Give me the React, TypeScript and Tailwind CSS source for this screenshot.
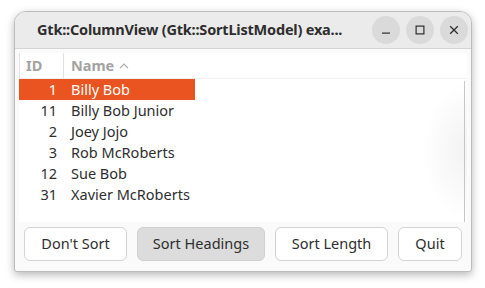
import React, { useState } from "react";

const people = [
  { id: 1, name: "Billy Bob" },
  { id: 11, name: "Billy Bob Junior" },
  { id: 2, name: "Joey Jojo" },
  { id: 3, name: "Rob McRoberts" },
  { id: 12, name: "Sue Bob" },
  { id: 31, name: "Xavier McRoberts" },
];

const font = { fontFamily: '"Noto Sans", "Open Sans", sans-serif' };

function CircleButton({ children }: { children: React.ReactNode }) {
  return (
    <div className="w-[28px] h-[28px] rounded-full bg-[#dadada] flex items-center justify-center text-[#2e2e2e]">
      {children}
    </div>
  );
}

export default function App() {
  const [selected, setSelected] = useState(1);

  return (
    <div
      className="w-[485px] h-[288px] bg-white pt-[11px] pl-[14px]"
      style={font}
    >
      <div className="w-[458px] h-[261px] rounded-t-[12px] rounded-b-[3px] border border-[#bcbcbc] bg-[#fafafa] shadow-[0_3px_8px_rgba(0,0,0,0.28)] flex flex-col overflow-hidden">
        {/* titlebar */}
        <div className="h-[37px] shrink-0 bg-[#ebebeb] border-b border-[#d4d4d4] flex items-center pl-[22px] pr-[3px]">
          <span className="text-[14.5px] font-bold text-[#2e2e2e] tracking-[-0.2px] grow truncate">
            Gtk::ColumnView (Gtk::SortListModel) exa...
          </span>
          <div className="flex gap-[6px] ml-[20px]">
            <CircleButton>
              <svg width="10" height="10" viewBox="0 0 10 10">
                <rect x="1" y="7.5" width="8" height="1.2" fill="currentColor" />
              </svg>
            </CircleButton>
            <CircleButton>
              <svg width="10" height="10" viewBox="0 0 10 10">
                <rect
                  x="1.1"
                  y="1.1"
                  width="7.8"
                  height="7.8"
                  fill="none"
                  stroke="currentColor"
                  strokeWidth="1.2"
                />
              </svg>
            </CircleButton>
            <CircleButton>
              <svg width="10" height="10" viewBox="0 0 10 10">
                <path
                  d="M1.2 1.2 L8.8 8.8 M8.8 1.2 L1.2 8.8"
                  stroke="currentColor"
                  strokeWidth="1.3"
                />
              </svg>
            </CircleButton>
          </div>
        </div>

        {/* column view */}
        <div className="mx-[4px] mt-[4px] h-[169px] bg-white relative overflow-hidden">
          <div className="flex h-[26px] border-b border-[#f0f0f0] text-[14.5px] font-bold text-[#a3a3a3]">
            <div className="w-[45px] border-l border-r border-[#e2e2e2] flex items-center pl-[6px]">
              ID
            </div>
            <div className="flex items-center pl-[7px] gap-[5px]">
              Name
              <svg width="10" height="8" viewBox="0 0 10 8" className="mt-[1px]">
                <path
                  d="M1 6 L5 2 L9 6"
                  fill="none"
                  stroke="#b0b0b0"
                  strokeWidth="1.2"
                />
              </svg>
            </div>
          </div>
          <div className="flex flex-col">
            {people.map((p) => (
              <div
                key={p.id}
                onClick={() => setSelected(p.id)}
                className={
                  "flex h-[21px] w-[176px] items-center text-[14.5px] " +
                  (selected === p.id
                    ? "bg-[#e95420] text-white"
                    : "text-[#2e2e2e]")
                }
              >
                <span className="w-[44px] text-right pr-[6px]">{p.id}</span>
                <span className="pl-[8px] whitespace-nowrap">{p.name}</span>
              </div>
            ))}
          </div>
          {/* overshoot glow and scroll edge */}
          <div className="absolute right-0 top-[28px] bottom-0 w-[45px] bg-[radial-gradient(ellipse_at_right,rgba(0,0,0,0.05),rgba(0,0,0,0)_70%)]" />
          <div className="absolute right-[2px] top-[28px] bottom-0 w-[1.5px] rounded-full bg-[#c6c6c6]" />
        </div>

        {/* buttons */}
        <div className="flex gap-[10px] px-[9px] pt-[5px] text-[14.5px] text-[#2e2e2e]">
          <button className="w-[103px] h-[34px] rounded-[6px] border border-[#d3d3d3] bg-white">
            Don't Sort
          </button>
          <button className="w-[128px] h-[34px] rounded-[6px] border border-[#d0d0d0] bg-[#dcdcdc]">
            Sort Headings
          </button>
          <button className="w-[113px] h-[34px] rounded-[6px] border border-[#d3d3d3] bg-white">
            Sort Length
          </button>
          <button className="w-[64px] h-[34px] rounded-[6px] border border-[#d3d3d3] bg-white">
            Quit
          </button>
        </div>
      </div>
    </div>
  );
}
